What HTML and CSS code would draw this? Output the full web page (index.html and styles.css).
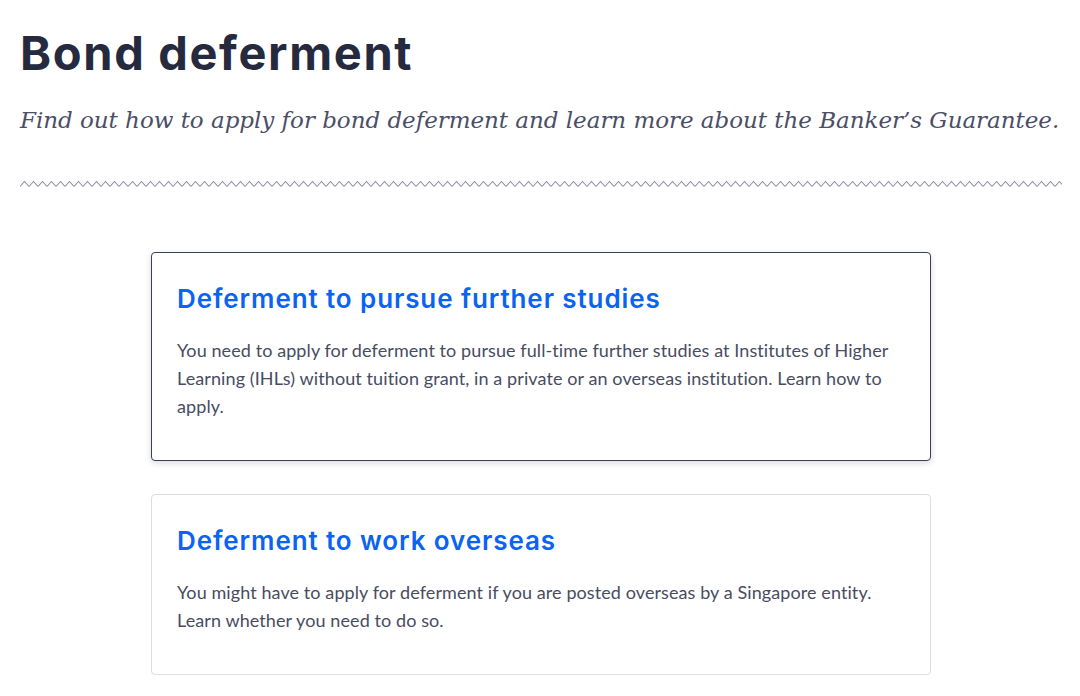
FILE: index.html
```html
<!DOCTYPE html>
<html lang="en">
<head>
<meta charset="utf-8">
<title>Bond deferment</title>
<link rel="stylesheet" href="styles.css">
</head>
<body>
<main class="page">
  <header class="intro">
    <h1 class="title">Bond deferment</h1>
    <p class="lead">Find out how to apply for bond deferment and learn more about the Banker’s Guarantee.</p>
    <svg class="wave" width="1042" height="8" viewBox="0 0 1042 8" aria-hidden="true">
      <defs>
        <pattern id="zig" x="0" y="0" width="9" height="8" patternUnits="userSpaceOnUse">
          <polyline points="0,6.5 4.5,1.5 9,6.5" fill="none" stroke="#8b8ca0" stroke-width="1.1"/>
        </pattern>
      </defs>
      <rect x="0" y="0" width="1042" height="8" fill="url(#zig)"/>
    </svg>
  </header>

  <section class="cards">
    <a class="card card-active" href="#">
      <h2 class="card-title">Deferment to pursue further studies</h2>
      <p class="card-text">You need to apply for deferment to pursue full-time further studies at Institutes of Higher Learning (IHLs) without tuition grant, in a private or an overseas institution. Learn how to apply.</p>
    </a>
    <a class="card" href="#">
      <h2 class="card-title">Deferment to work overseas</h2>
      <p class="card-text">You might have to apply for deferment if you are posted overseas by a Singapore entity. Learn whether you need to do so.</p>
    </a>
  </section>
</main>
</body>
</html>
```

FILE: styles.css
```css
html, body {
  margin: 0;
  padding: 0;
  background: #ffffff;
}

.page {
  padding: 0 18px 0 20px;
  font-family: Lato, "Noto Sans", sans-serif;
}

.intro {
  display: flex;
  flex-direction: column;
}

.title {
  margin: 25px 0 0 0;
  font-family: Inter, "Noto Sans", sans-serif;
  font-weight: 700;
  font-size: 47px;
  line-height: 56px;
  color: #262a3e;
  letter-spacing: 1.65px;
}

.lead {
  margin: 23px 0 0 0;
  font-family: "DejaVu Serif", "Liberation Serif", serif;
  font-style: italic;
  font-size: 23px;
  line-height: 32px;
  letter-spacing: -0.03px;
  color: #4a4e66;
}

.wave {
  display: block;
  margin-top: 44px;
}

.cards {
  width: 780px;
  margin: 64px auto 0 auto;
  display: flex;
  flex-direction: column;
  gap: 33px;
}

.card {
  display: block;
  text-decoration: none;
  background: #fff;
  border: 1px solid #dcdde2;
  border-radius: 4px;
  padding: 25px 25px 40px 25px;
}

.card-active {
  border-color: #3c3f55;
  box-shadow: 0 2px 6px rgba(40, 44, 70, 0.18);
}

.card-title {
  margin: 4px 0 0 0;
  font-family: Inter, "Noto Sans", sans-serif;
  font-weight: 600;
  font-size: 26px;
  line-height: 34px;
  letter-spacing: 0.9px;
  color: #0a63f2;
}

.card-text {
  margin: 20px 0 0 0;
  font-size: 18px;
  line-height: 28px;
  letter-spacing: 0.09px;
  color: #484c62;
}
```
